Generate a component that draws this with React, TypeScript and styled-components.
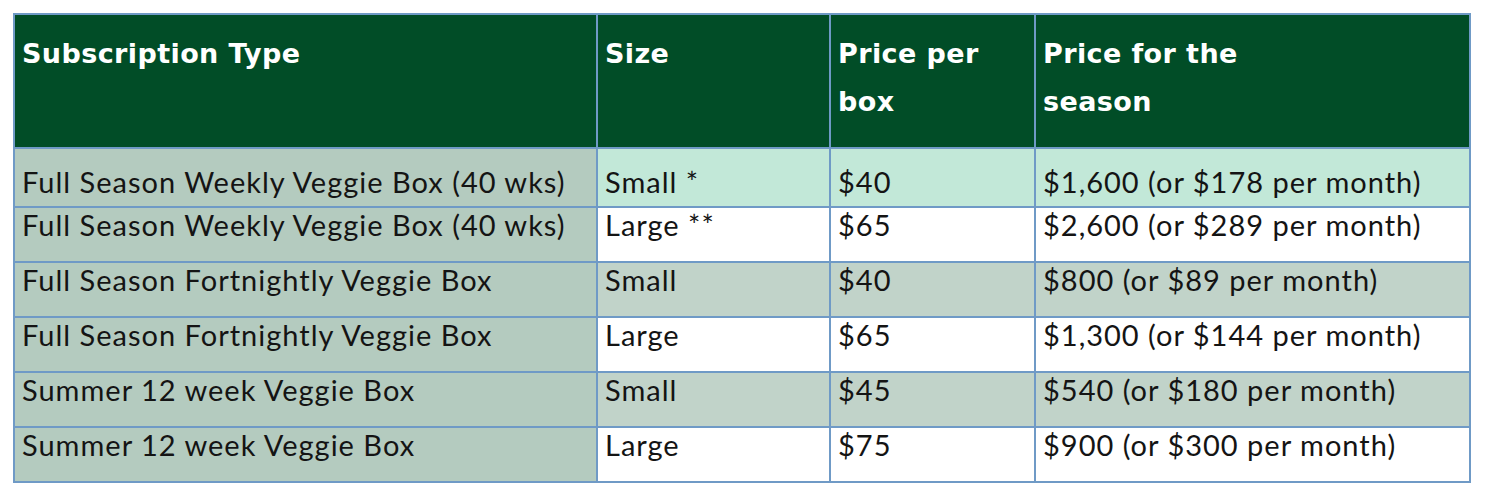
import styled, { createGlobalStyle } from 'styled-components';

type Shade = 'mint' | 'white' | 'sage';

interface PriceRow {
  type: string;
  size: string;
  perBox: string;
  season: string;
  shade: Shade;
}

const rows: PriceRow[] = [
  { type: 'Full Season Weekly Veggie Box (40 wks)', size: 'Small *', perBox: '$40', season: '$1,600 (or $178 per month)', shade: 'mint' },
  { type: 'Full Season Weekly Veggie Box (40 wks)', size: 'Large **', perBox: '$65', season: '$2,600 (or $289 per month)', shade: 'white' },
  { type: 'Full Season Fortnightly Veggie Box', size: 'Small', perBox: '$40', season: '$800 (or $89 per month)', shade: 'sage' },
  { type: 'Full Season Fortnightly Veggie Box', size: 'Large', perBox: '$65', season: '$1,300 (or $144 per month)', shade: 'white' },
  { type: 'Summer 12 week Veggie Box', size: 'Small', perBox: '$45', season: '$540 (or $180 per month)', shade: 'sage' },
  { type: 'Summer 12 week Veggie Box', size: 'Large', perBox: '$75', season: '$900 (or $300 per month)', shade: 'white' }
];

const shades: Record<Shade, string> = {
  mint: '#c2e8d8',
  white: '#ffffff',
  sage: '#c1d3c9'
};

const App: React.FC = () => (
  <>
    <GlobalStyle />
    <Page>
      <PriceTable>
        <colgroup>
          <col style={{ width: 583 }} />
          <col style={{ width: 233 }} />
          <col style={{ width: 205 }} />
          <col style={{ width: 435 }} />
        </colgroup>
        <thead>
          <tr>
            <HeadCell>Subscription Type</HeadCell>
            <HeadCell>Size</HeadCell>
            <HeadCell>
              Price per
              <br />
              box
            </HeadCell>
            <HeadCell>
              Price for the
              <br />
              season
            </HeadCell>
          </tr>
        </thead>
        <tbody>
          {rows.map((row, i) => (
            <BodyRow key={i} $first={i === 0}>
              <TypeCell>{row.type}</TypeCell>
              <Cell $shade={row.shade}>{row.size}</Cell>
              <Cell $shade={row.shade}>{row.perBox}</Cell>
              <Cell $shade={row.shade}>{row.season}</Cell>
            </BodyRow>
          ))}
        </tbody>
      </PriceTable>
    </Page>
  </>
);

const GlobalStyle = createGlobalStyle`
  html, body {
    margin: 0;
    padding: 0;
    background: #ffffff;
    overflow: hidden;
  }
`;

const Page = styled.div`
  padding: 13px 0 0 13px;
  height: 484px;
  box-sizing: border-box;
  font-family: Lato, 'Open Sans', sans-serif;
`;

const PriceTable = styled.table`
  border-collapse: collapse;
  table-layout: fixed;
  width: 1458px;
  border: 2px solid #6f9ac6;
`;

const HeadCell = styled.th`
  background: #014d27;
  color: #ffffff;
  font-family: 'DejaVu Sans', Lato, sans-serif;
  font-weight: 700;
  font-size: 27px;
  letter-spacing: 0.4px;
  line-height: 48px;
  text-align: left;
  vertical-align: top;
  padding: 15px 6px 0 7px;
  height: 117px;
  border: 2px solid #6f9ac6;
  white-space: nowrap;
`;

const BodyRow = styled.tr<{ $first: boolean }>`
  height: ${(p) => (p.$first ? 59 : 55)}px;

  & > td {
    padding-top: ${(p) => (p.$first ? 16 : 0)}px;
  }
`;

const Cell = styled.td<{ $shade: Shade }>`
  background: ${(p) => shades[p.$shade]};
  color: #141414;
  font-size: 29px;
  letter-spacing: 1px;
  line-height: 34px;
  vertical-align: top;
  padding: 0 6px 0 7px;
  border: 2px solid #6f9ac6;
  white-space: nowrap;
`;

const TypeCell = styled(Cell).attrs({ $shade: 'white' as Shade })`
  background: #b4cbbf;
`;

export default App;
